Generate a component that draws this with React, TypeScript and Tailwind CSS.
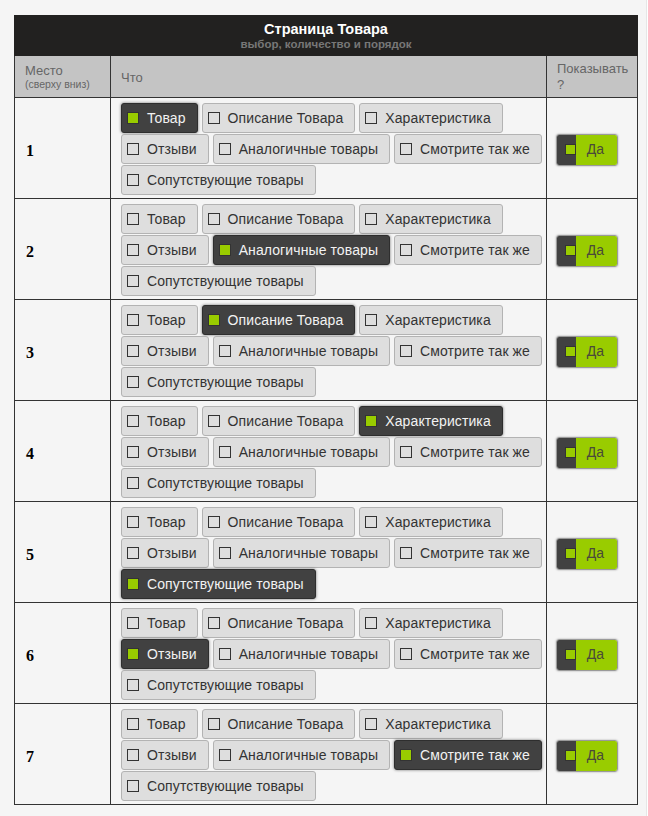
import React from 'react';

const options = [
  'Товар',
  'Описание Товара',
  'Характеристика',
  'Отзыви',
  'Аналогичные товары',
  'Смотрите так же',
  'Сопутствующие товары',
];

// какой блок выбран на каждом месте
const rows = [0, 4, 1, 2, 6, 3, 5];

function OptionButton({ label, active }: { label: string; active: boolean }) {
  return (
    <span
      className={
        active
          ? 'inline-flex items-center h-[30px] pl-[5px] pr-[11px] rounded-[3px] border border-[#2e2e2e] bg-[#414141] text-[#f2f2f2] shadow-[0_0_3px_rgba(0,0,0,0.55)]'
          : 'inline-flex items-center h-[30px] pl-[5px] pr-[11px] rounded-[3px] border border-[#b3b3b3] bg-[#dedede] text-[#333]'
      }
    >
      <span
        className={
          active
            ? 'w-[12px] h-[12px] border border-[#333] bg-[#99cc00] shrink-0'
            : 'w-[12px] h-[12px] border border-[#333] shrink-0'
        }
      />
      <span className="ml-[8px] text-[14px] leading-none tracking-[0.1px]">{label}</span>
    </span>
  );
}

function Toggle() {
  return (
    <span className="inline-flex h-[32px] w-[62px] rounded-[3px] border border-[#9a9a9a] overflow-hidden shadow-[0_0_2px_rgba(0,0,0,0.35)]">
      <span className="w-[19px] bg-[#414141] flex items-center justify-end">
        <span className="w-[11px] h-[11px] border border-[#333] bg-[#99cc00]" />
      </span>
      <span className="flex-1 bg-[#99cc00] flex items-center justify-center text-[14px] text-[#4a4a3a] pr-[2px]">
        Да
      </span>
    </span>
  );
}

export default function App() {
  return (
    <div
      className="min-h-[816px] w-[647px] bg-[#f5f5f5] border-r border-[#e6e6e6] pt-[15px] pl-[14px]"
      style={{ fontFamily: '"Liberation Sans", Arial, sans-serif' }}
    >
      <table className="w-[623px] table-fixed border-collapse">
        <colgroup>
          <col className="w-[96px]" />
          <col className="w-[436px]" />
          <col className="w-[91px]" />
        </colgroup>
        <thead>
          <tr className="h-[40px] bg-[#222120]">
            <th colSpan={3} className="border border-[#222120] text-center align-middle">
              <div className="text-[14.5px] font-bold text-white leading-[16px]">Страница Товара</div>
              <div className="text-[11.5px] font-bold text-[#777] leading-[14px]">выбор, количество и порядок</div>
            </th>
          </tr>
          <tr className="h-[42px] bg-[#c4c4c4] text-[#666] font-normal">
            <th className="border border-[#333] pl-[10px] text-left align-middle font-normal">
              <div className="text-[13px] leading-[15px]">Место</div>
              <div className="text-[10.5px] leading-[13px]">(сверху вниз)</div>
            </th>
            <th className="border border-[#333] pl-[10px] pt-[2px] text-left align-middle font-normal text-[13px]">
              Что
            </th>
            <th className="border border-[#333] pl-[10px] text-left align-middle font-normal text-[13px] leading-[16px]">
              Показывать ?
            </th>
          </tr>
        </thead>
        <tbody>
          {rows.map((sel, i) => (
            <tr key={i} className="h-[101px]">
              <td className="border border-[#333] pl-[11px] pt-[5px] align-middle">
                <span
                  className="text-[16px] font-bold text-black"
                  style={{ fontFamily: '"Liberation Serif", "Times New Roman", serif' }}
                >
                  {i + 1}
                </span>
              </td>
              <td className="border border-[#333] pl-[10px] pr-[4px] pt-[5px] pb-[3px] align-top">
                <div className="flex flex-wrap gap-x-[4px] gap-y-px">
                  {options.map((o, k) => (
                    <OptionButton key={o} label={o} active={k === sel} />
                  ))}
                </div>
              </td>
              <td className="border border-[#333] pl-[9px] pt-[3px] align-middle">
                <Toggle />
              </td>
            </tr>
          ))}
        </tbody>
      </table>
    </div>
  );
}
